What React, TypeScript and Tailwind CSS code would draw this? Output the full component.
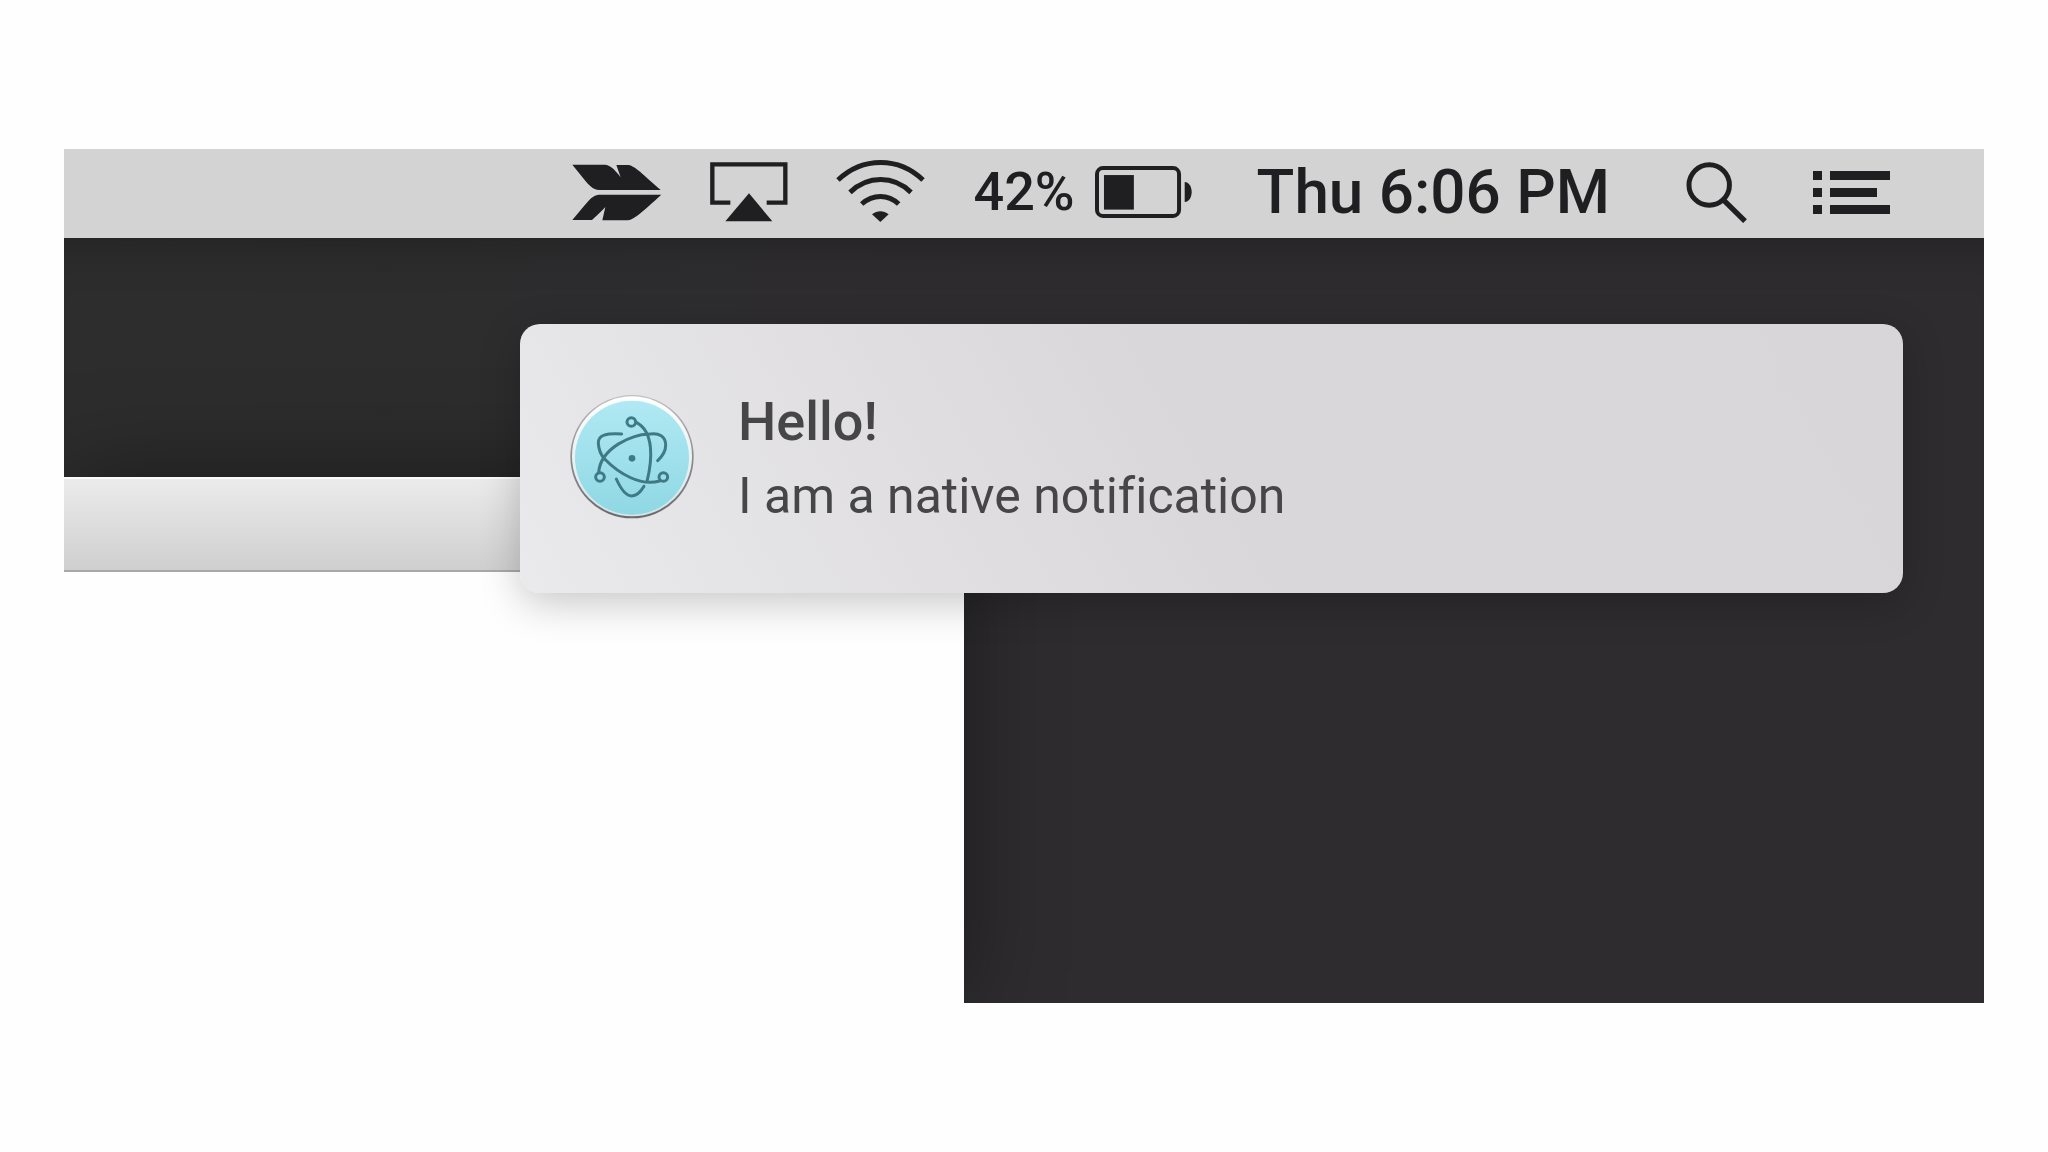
import React from "react";

const INK = "#1f1f21";

function FeatherIcon() {
  return (
    <svg viewBox="72 66 270 177" className="h-[59px] w-[90px]" fill={INK} aria-hidden="true">
      <path d="M73 71H172C190 74 204 90 218 109L205 72H242C262 76 282 98 338 147H154C134 147 121 130 110 117Z" />
      <path d="M340 161H152C134 162 121 180 110 193L73 237H132C142 228 160 212 172 198L163 238H240C260 234 284 212 340 161Z" />
    </svg>
  );
}

function AirPlayIcon() {
  return (
    <svg viewBox="486 65 234 180" className="h-[60px] w-[78px]" aria-hidden="true">
      <path d="M547 187H493V72H712V187H656" fill="none" stroke={INK} strokeWidth="13" />
      <path d="M603 159L673 243H532Z" fill={INK} />
    </svg>
  );
}

function WifiIcon() {
  return (
    <svg viewBox="80 55 267 189" className="h-[63px] w-[89px]" aria-hidden="true">
      <g fill="none" stroke={INK} strokeWidth="15">
        <path d="M86 118C160 48 268 48 341 118" />
        <path d="M122 155C176 104 252 104 305 155" />
        <path d="M157 190C191 160 236 160 268 190" />
      </g>
      <path d="M188 221C204 209 222 209 238 221L213 244Z" fill={INK} />
    </svg>
  );
}

function BatteryIcon() {
  return (
    <svg viewBox="852 76 295 156" className="h-[52px] w-[98px]" aria-hidden="true">
      <rect x="858" y="82" width="247" height="144" rx="18" fill="none" stroke={INK} strokeWidth="12" />
      <rect x="879" y="103" width="90" height="104" fill={INK} />
      <path d="M1122 124C1150 126 1150 182 1122 184Z" fill={INK} />
    </svg>
  );
}

function SearchIcon() {
  return (
    <svg viewBox="107 66 184 183" className="h-[61px] w-[61px]" fill="none" stroke={INK} aria-hidden="true">
      <circle cx="177" cy="135" r="61" strokeWidth="15" />
      <path d="M219 179L285 244" strokeWidth="16" />
    </svg>
  );
}

function ListIcon() {
  return (
    <svg viewBox="489 90 231 129" className="h-[43px] w-[77px]" fill={INK} aria-hidden="true">
      <path d="M489 90h27v27h-27zM489 141h27v27h-27zM489 192h27v27h-27z" />
      <path d="M540 90h180v27H540zM540 141h141v27H540zM540 192h180v27H540z" />
    </svg>
  );
}

function ElectronIcon() {
  return (
    <svg viewBox="89 72 372 375" className="mb-1 h-[125px] w-[124px] shrink-0" role="img" aria-label="Electron">
      <defs>
        <linearGradient id="face" x1="0" y1="0" x2="0" y2="1">
          <stop offset="0" stopColor="#b0e9f3" />
          <stop offset="1" stopColor="#8fd8e4" />
        </linearGradient>
        <linearGradient id="rim" x1="0" y1="0" x2="0" y2="1">
          <stop offset="0" stopColor="#c4c0c1" />
          <stop offset="0.5" stopColor="#928c8e" />
          <stop offset="1" stopColor="#6e6a6c" />
        </linearGradient>
        <linearGradient id="bevel" x1="0" y1="0" x2="0" y2="1">
          <stop offset="0" stopColor="#ffffff" />
          <stop offset="1" stopColor="#d3e6e9" />
        </linearGradient>
      </defs>
      <circle cx="275" cy="260" r="185" fill="url(#rim)" />
      <circle cx="275" cy="259" r="180" fill="url(#bevel)" />
      <circle cx="275" cy="263" r="171" fill="url(#face)" />
      <g fill="none" stroke="#3f7985" strokeWidth="9" strokeLinecap="round">
        <path d="M288 157C342 185 336 270 320 334" />
        <path d="M323 193C280 192 180 232 175 308" />
        <path d="M193 267C235 310 300 350 358 333" />
        <path d="M244 192C200 189 172 195 174 220C175 238 182 255 193 267" />
        <path d="M323 193C358 187 376 200 376 226C376 242 364 261 352 272" />
        <path d="M228 327C243 360 257 378 274 378C290 378 301 366 311 349" />
        <circle cx="273" cy="156" r="13" />
        <circle cx="179" cy="321" r="13" />
        <circle cx="369" cy="321" r="13" />
      </g>
      <circle cx="275" cy="265" r="10" fill="#3f7985" />
    </svg>
  );
}

function MenuBar() {
  return (
    <header className="flex h-[89px] shrink-0 items-center justify-end bg-[#d3d3d4] pr-[94px] pb-[3px] text-[#1f1f21]">
      <button type="button" aria-label="Feather" className="mr-12">
        <FeatherIcon />
      </button>
      <button type="button" aria-label="AirPlay" className="mr-12">
        <AirPlayIcon />
      </button>
      <button type="button" aria-label="Wi-Fi" className="mr-12 pb-1">
        <WifiIcon />
      </button>
      <button type="button" className="mr-16 flex items-center gap-5">
        <span className="text-[54px] leading-none font-medium">42%</span>
        <BatteryIcon />
      </button>
      <button type="button" className="mr-[76px] text-[62px] leading-none font-medium whitespace-nowrap">
        Thu 6:06 PM
      </button>
      <button type="button" aria-label="Search" className="mr-[66px]">
        <SearchIcon />
      </button>
      <button type="button" aria-label="Notification Center">
        <ListIcon />
      </button>
    </header>
  );
}

function AppWindow() {
  return (
    <section
      aria-label="Window"
      className="mt-[239px] flex w-[46.875%] flex-col bg-[#fefefe] shadow-[0_0_90px_rgba(0,0,0,0.4)]"
    >
      <div className="h-[95px] border-t-2 border-b-2 border-t-[#fafafa] border-b-[#a8a8a8] bg-linear-to-b from-[#ebebeb] to-[#cfcfcf]" />
    </section>
  );
}

function Notification() {
  return (
    <div
      role="alert"
      className="absolute top-[86px] right-[81px] left-[456px] flex h-[269px] items-center gap-11 rounded-[20px] bg-linear-[60deg] from-[#eae9eb] from-0% via-[#d9d7da] via-50% to-[#d8d6d9] pl-[50px] text-[#464547] shadow-[0_10px_40px_rgba(0,0,0,0.22)]"
    >
      <ElectronIcon />
      <div>
        <h1 className="text-[54px] leading-[74px] font-medium">Hello!</h1>
        <p className="text-[50px] leading-[74px] [font-variant-ligatures:none]">I am a native notification</p>
      </div>
    </div>
  );
}

export default function App() {
  return (
    <div className="flex min-h-screen flex-col bg-[#fefefe] px-16 py-[149px] font-[Roboto,'Liberation_Sans',sans-serif]">
      <MenuBar />
      <main className="relative flex flex-1 overflow-hidden bg-linear-to-r from-[#2d2d2d] via-[#2e2c2f] via-50% to-[#2e2c2f] inset-shadow-[0_50px_50px_-50px_rgba(0,0,0,0.3)]">
        <AppWindow />
        <Notification />
      </main>
    </div>
  );
}
